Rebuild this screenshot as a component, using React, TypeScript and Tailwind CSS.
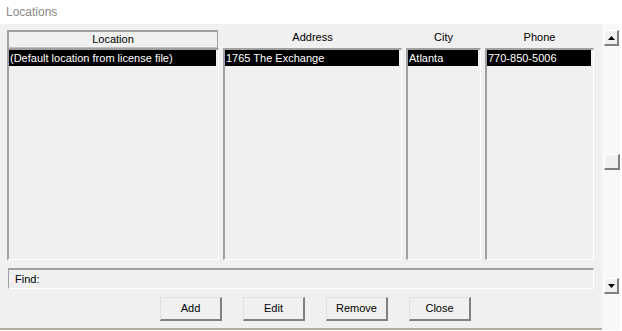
import React from "react";

const font = { fontFamily: '"Liberation Sans", Arial, sans-serif' };

function Col({ w, header, boxed, value }: { w: string; header: string; boxed?: boolean; value: string }) {
  return (
    <div className={`flex flex-col ${w}`}>
      {boxed ? (
        <div className="h-[18px] mr-[1px] border-t-2 border-l-2 border-r border-b border-t-[#a0a0a0] border-l-[#a0a0a0] border-r-[#a0a0a0] border-b-[#c0c0c0] bg-[#f0f0f0] flex items-center justify-center text-[11px] text-black leading-none">
          {header}
        </div>
      ) : (
        <div className="h-[18px] flex items-start justify-center text-[11px] text-black leading-none pt-[2px]">
          {header}
        </div>
      )}
      <div className="h-[212px] border-t-2 border-l-2 border-r border-b border-t-[#a0a0a0] border-l-[#a0a0a0] border-r-white border-b-white bg-[#f0f0f0] pr-[2px]">
        <div className="h-[16px] bg-black text-white text-[11px] leading-[16px] pl-[1px] whitespace-nowrap overflow-hidden">
          {value}
        </div>
      </div>
    </div>
  );
}

function Btn({ label }: { label: string }) {
  return (
    <div className="w-[62px] h-[24px] border-t border-l border-r-2 border-b-2 border-t-[#e0e0e0] border-l-[#e0e0e0] border-r-[#808080] border-b-[#808080] bg-[#f0f0f0] flex items-center justify-center text-[11px] text-black">
      {label}
    </div>
  );
}

export default function App() {
  return (
    <div className="w-[622px] h-[331px] bg-white overflow-hidden flex flex-col" style={font}>
      <div className="h-[24px] flex items-center pl-[6px] text-[12px] text-[#8a8a8a]">Locations</div>
      <div className="flex h-[306px]">
        <div className="w-[602px] bg-[#f0f0f0] flex flex-col">
          <div className="flex gap-[4px] pl-[7px] pt-[6px]">
            <Col w="w-[212px]" header="Location" boxed value="(Default location from license file)" />
            <Col w="w-[179px]" header="Address" value="1765 The Exchange" />
            <Col w="w-[75px]" header="City" value="Atlanta" />
            <Col w="w-[109px]" header="Phone" value="770-850-5006" />
          </div>
          <div className="ml-[8px] mt-[8px] w-[586px] h-[21px] border-t-2 border-l border-r border-b border-t-[#a0a0a0] border-l-[#a0a0a0] border-r-white border-b-white flex items-center pl-[6px] text-[11px] text-black">
            Find:
          </div>
          <div className="flex gap-[21px] pl-[160px] mt-[8px]">
            <Btn label="Add" />
            <Btn label="Edit" />
            <Btn label="Remove" />
            <Btn label="Close" />
          </div>
          <div className="flex-1" />
          <div className="h-[2px] bg-[#b0ab9c]" />
        </div>
        <div className="w-[18px] bg-[#f8f8f8] flex flex-col pt-[6px] pl-[2px]">
          <div className="w-[15px] h-[16px] bg-[#f0f0f0] border-t border-l border-r-2 border-b-2 border-t-white border-l-white border-r-[#808080] border-b-[#808080] flex items-center justify-center">
            <svg width="7" height="4" viewBox="0 0 7 4"><path d="M3.5 0 L7 4 L0 4 Z" fill="#000" /></svg>
          </div>
          <div className="h-[108px]" />
          <div className="w-[16px] h-[16px] bg-[#f0f0f0] border-t border-l border-r-2 border-b-2 border-t-white border-l-white border-r-[#808080] border-b-[#808080]" />
          <div className="h-[108px]" />
          <div className="w-[15px] h-[16px] bg-[#f0f0f0] border-t border-l border-r-2 border-b-2 border-t-white border-l-white border-r-[#808080] border-b-[#808080] flex items-center justify-center">
            <svg width="7" height="4" viewBox="0 0 7 4"><path d="M0 0 L7 0 L3.5 4 Z" fill="#000" /></svg>
          </div>
        </div>
        <div className="flex-1 bg-white" />
      </div>
      <div className="flex-1 bg-white" />
    </div>
  );
}
